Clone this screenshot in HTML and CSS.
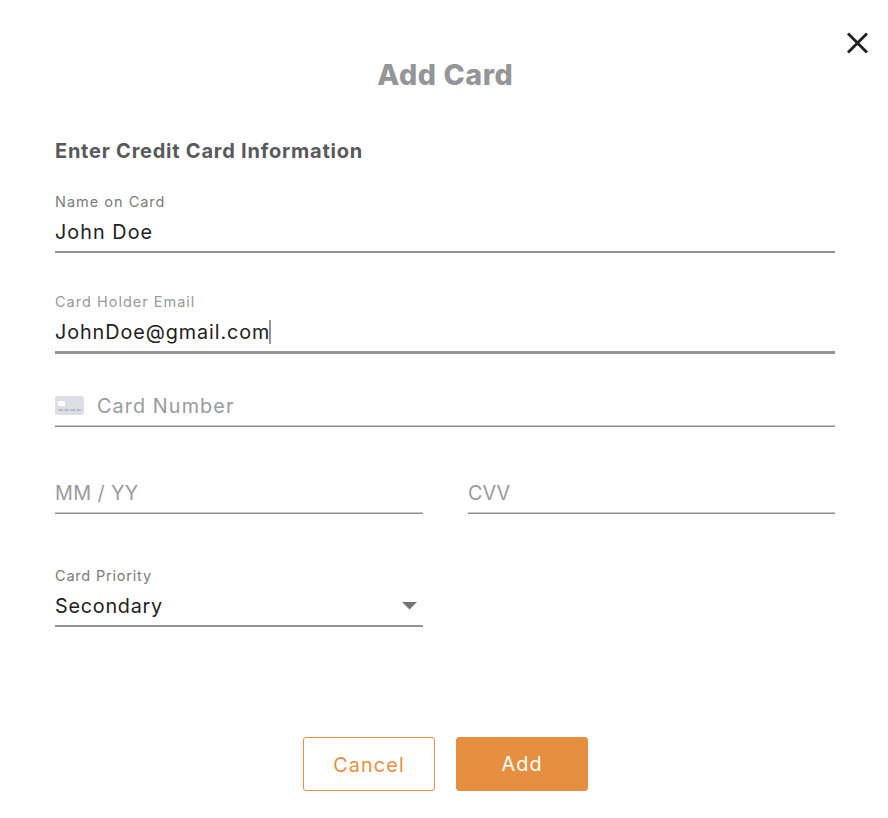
FILE: index.html
```html
<!DOCTYPE html>
<html lang="en">
<head>
<meta charset="utf-8">
<title>Add Card</title>
<link rel="stylesheet" href="styles.css">
</head>
<body>
<main class="dialog">
  <button class="close" aria-label="Close"><svg width="22" height="22" viewBox="0 0 22 22"><path d="M2 1.5l19 19M21 1.5l-19 19" stroke="#202124" stroke-width="2.9" fill="none"/></svg></button>
  <h1><span class="title">Add Card</span></h1>
  <h2><span class="subtitle">Enter Credit Card Information</span></h2>
  <div class="field name">
    <div class="label"><span class="t-name-label">Name on Card</span></div>
    <div class="value"><span class="t-name">John Doe</span></div>
  </div>
  <div class="field email">
    <div class="label"><span class="t-email-label">Card Holder Email</span></div>
    <div class="value"><span class="t-email">JohnDoe@gmail.com</span><i class="caret"></i></div>
  </div>
  <div class="field thin number">
    <svg class="card-icon" width="29" height="19" viewBox="0 0 29 19"><rect width="29" height="19" rx="2.5" fill="#dddee5"/><rect x="3" y="5" width="7" height="5" rx="1" fill="#fff"/><path d="M3.5 14h4.5M9.5 14h4.5M15.5 14h4.5M21.5 14h4.5" stroke="#b7b9ca" stroke-width="1.8"/></svg>
    <div class="value"><span class="t-number">Card Number</span></div>
  </div>
  <div class="row">
    <div class="field thin"><div class="value"><span class="t-date">MM / YY</span></div></div>
    <div class="field thin"><div class="value"><span class="t-cvv">CVV</span></div></div>
  </div>
  <div class="row">
    <div class="field priority">
      <div class="label"><span class="t-priority">Card Priority</span></div>
      <div class="value"><span class="t-secondary">Secondary</span><svg class="arrow" width="15" height="8" viewBox="0 0 15 8"><path d="M0 0h15L7.5 7.5z" fill="#757575"/></svg></div>
    </div>
  </div>
  <div class="actions">
    <button class="btn cancel"><span class="t-cancel">Cancel</span></button>
    <button class="btn add"><span class="t-add">Add</span></button>
  </div>
</main>
</body>
</html>
```
FILE: styles.css
```css
* { box-sizing: border-box; }
body { margin: 0; background: #fff; color: #212121; font-family: Inter, "Liberation Sans", sans-serif; }
button { font: inherit; padding: 0; cursor: pointer; }
.dialog { position: relative; height: 818px; padding: 55px 53px 0 55px; }
.close { position: absolute; top: 32px; right: 20px; width: 22px; height: 22px; border: 0; background: none; }
.close svg { display: block; overflow: visible; }
h1 { margin: 0; height: 40px; line-height: 40px; font-size: 28.6px; font-weight: 800; text-align: center; color: #939598; }
h2 { margin: 42px 0 28px; height: 28px; line-height: 28px; font-size: 20px; font-weight: 700; color: #58595b; }
.field { border-bottom: 2px solid #929292; padding-bottom: 7px; }
.label { height: 18px; margin-bottom: 9px; line-height: 18px; font-size: 14.5px; color: #7b7b7b; white-space: nowrap; }
.value { display: flex; align-items: center; height: 24px; line-height: 24px; font-size: 19.8px; white-space: nowrap; }
.email { margin-top: 40px; border-bottom: 3px solid #929497; }
.email .label { color: #97999c; }
.caret { width: 2px; height: 24px; background: #939598; }
.thin { border-bottom: 1px solid #8e8e8e; padding-bottom: 7px; box-shadow: inset 0 -1px #c6c6c6; }
.thin .value { color: #999b9e; }
.number { display: flex; margin-top: 40px; padding-bottom: 8px; }
.card-icon { margin: 2px 13px 0 0; }
.row { display: grid; grid-template-columns: 368px 367px; column-gap: 45px; margin-top: 54px; }
.row .thin { padding-bottom: 8px; }
.row + .row { margin-top: 53px; }
.priority .value { justify-content: space-between; padding-right: 6px; }
.actions { display: flex; justify-content: center; gap: 21px; margin-top: 110px; }
.btn { width: 132px; height: 54px; border: 1px solid #e78f40; border-radius: 3px; font-size: 19.8px; line-height: 52px; }
.cancel { color: #e78f40; background: #fff; padding-top: 1px; }
.add { color: #fff; background: #e78f40; }

/* Tracking per text run */
.title { letter-spacing: 0.6px; margin-right: -0.6px; }
.subtitle { letter-spacing: 0.76px; }
.t-name-label, .t-email-label { letter-spacing: 1px; }
.t-priority { letter-spacing: 0.8px; }
.t-name { letter-spacing: 1.05px; }
.t-email { letter-spacing: 0.92px; margin-right: -1px; }
.t-number { letter-spacing: 1.1px; }
.t-date { letter-spacing: 0.4px; }
.t-cvv { letter-spacing: 0; }
.t-secondary { letter-spacing: 0.75px; }
.t-cancel, .t-add { letter-spacing: 1.1px; margin-right: -1.1px; }
```
